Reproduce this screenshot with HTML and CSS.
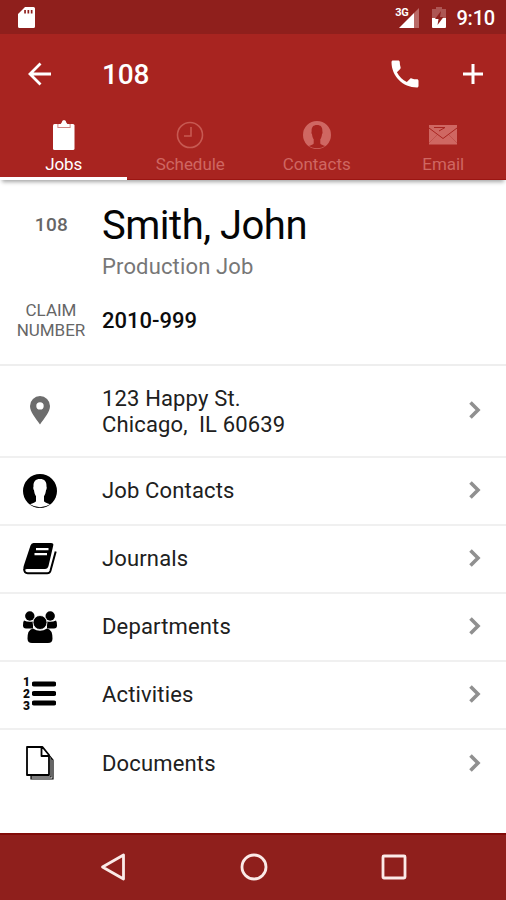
FILE: index.html
```html
<!DOCTYPE html>
<html lang="en">
<head>
<meta charset="utf-8">
<title>108</title>
<link rel="stylesheet" href="styles.css">
</head>
<body>
<svg class="defs" width="0" height="0" aria-hidden="true">
  <symbol id="person" viewBox="0 0 34 34"><path fill-rule="evenodd" d="M17 0a17 17 0 1 1 0 34a17 17 0 0 1 0-34zM17 5c-4.500 0-6.800 2.500-6.500 7.500c-.5.700-.2 3 .5 3.800c.3 2.500 1 4.500 2 6v5c-.5 1.200-3 2-6 3q4.500 2.900 10 2.900t10-2.900c-3-1-5.500-1.800-6-3v-5c1-1.500 1.700-3.500 2-6c.7-.8 1-3.100.5-3.800c.3-5-2-7.500-6.500-7.500z"/></symbol>
  <symbol id="chevron" viewBox="0 0 14 20"><path d="M2.500 2.500L10 10L2.500 17.500" fill="none" stroke="#909090" stroke-width="3.600"/></symbol>
</svg>
<div class="screen">
  <header class="status">
    <svg class="sd" width="18" height="22" viewBox="0 0 18 22"><path fill="#fff" fill-rule="evenodd" d="M7 0h8.500q1.500 0 1.500 1.500v18q0 1.500-1.500 1.500h-14q-1.500 0-1.500-1.500V7zM6.200 3v3.500h1.700V3zM9.500 3v3.500h1.700V3zM12.800 3v3.500h1.700V3z"/></svg>
    <div class="status-right">
      <span class="network">3G</span>
      <svg class="signal" width="22" height="21" viewBox="0 0 22 21"><path d="M21 0v20h-5V5z" fill="#b96a67"/><path d="M16 5v15H1z" fill="#fff"/></svg>
      <svg class="battery" width="14" height="22" viewBox="0 0 14 22"><path d="M4 0h6v2h4v9H0V2h4z" fill="#ad5654"/><path d="M0 11h14v9q0 1-1 1H1q-1 0-1-1z" fill="#fff"/><path d="M9 4l-6 8h3.500l-1 6l6-8H8z" fill="#8f1f1c"/></svg>
      <span class="time">9:10</span>
    </div>
  </header>
  <div class="appbar">
    <svg class="back" width="24" height="24" viewBox="0 0 24 24"><path d="M12.500 1.500L2 12l10.500 10.500M2 12h21" fill="none" stroke="#fff" stroke-width="2.800"/></svg>
    <h1>108</h1>
    <svg class="phone" width="36" height="36" viewBox="0 0 24 24"><path fill="#fff" d="M6.620 10.790c1.440 2.830 3.760 5.140 6.590 6.590l2.200-2.200c.27-.27.67-.36 1.020-.24 1.120.37 2.330.57 3.570.57.55 0 1 .45 1 1V20c0 .55-.45 1-1 1-9.390 0-17-7.610-17-17 0-.55.45-1 1-1h3.500c.55 0 1 .45 1 1 0 1.250.2 2.450.57 3.570.11.35.03.74-.25 1.020l-2.200 2.200z"/></svg>
    <svg class="plus" width="22" height="22" viewBox="0 0 22 22"><path d="M11 1v20M1 11h20" stroke="#fff" stroke-width="3"/></svg>
  </div>
  <nav class="tabs">
    <div class="tab active">
      <svg width="24" height="32" viewBox="0 0 24 32"><path fill="#fff" d="M2.500 5H21q1.500 0 1.500 1.500v23q0 1.500-1.500 1.500H2.500Q1 31 1 29.500v-23Q1 5 2.500 5z"/><path d="M6 5v3.500h12V5" fill="none" stroke="#cf8582" stroke-width="1.200"/><path fill="#fff" d="M6.600 8V5.500q2.500-.3 3-1.800Q10 1 12 1t2.400 2.700q.5 1.500 3 1.800V8z"/></svg>
      <span>Jobs</span>
    </div>
    <div class="tab">
      <svg width="28" height="32" viewBox="0 0 28 32"><g fill="none" stroke="#c75952" stroke-width="1.600"><circle cx="14" cy="16" r="12.500"/><path d="M15 8v9H8"/></g></svg>
      <span>Schedule</span>
    </div>
    <div class="tab">
      <svg width="30" height="32" viewBox="0 0 30 32"><use href="#person" x="1" y="1.500" width="28" height="29" fill="#cf6762"/></svg>
      <span>Contacts</span>
    </div>
    <div class="tab">
      <svg width="30" height="32" viewBox="0 0 30 32"><path fill="#cf6762" d="M1 6h28v19.500H1z"/><path d="M1 9l14 10.500L29 9M6 8.500h11l-6 3.500" fill="none" stroke="#a82420" stroke-width="1"/><path d="M1 24l8-8M29 24l-8-8" fill="none" stroke="#b94540" stroke-width=".6"/></svg>
      <span>Email</span>
    </div>
  </nav>
  <main>
    <section class="summary">
      <div class="job-no">108</div>
      <div class="heading"><div class="name">Smith, John</div><div class="kind">Production Job</div></div>
      <div class="claim">CLAIM<br>NUMBER</div>
      <div class="claim-no">2010-999</div>
    </section>
    <section class="row address">
      <div class="icon"><svg width="20" height="29" viewBox="0 0 20 29"><path fill="#6d6d6d" fill-rule="evenodd" d="M10 0a10 10 0 0 1 10 10c0 6-5.500 12-10 18.500C5.500 22 0 16 0 10A10 10 0 0 1 10 0zM10 6.200a3.700 3.700 0 1 0 0 7.400a3.700 3.700 0 1 0 0-7.400z"/></svg></div>
      <div class="label">123 Happy St.<br>Chicago,&nbsp; IL 60639</div>
      <svg class="chev" width="14" height="20"><use href="#chevron"/></svg>
    </section>
    <section class="row">
      <div class="icon"><svg width="34" height="34"><use href="#person"/></svg></div>
      <div class="label">Job Contacts</div>
      <svg class="chev" width="14" height="20"><use href="#chevron"/></svg>
    </section>
    <section class="row">
      <div class="icon"><svg width="34" height="32" viewBox="0 0 34 32"><path d="M10.500 0H28q3 0 2.200 2.800L25.500 23q-.8 3-3.500 3H4Q1.500 26 .5 27.500q-.5-2 .2-4.500L7.500 2.500Q8.300 0 10.500 0z"/><path d="M1.300 26q-.3 4.200 3.400 4.200h19.500q2.500 0 3.200-2.200l5.300-19.500" fill="none" stroke="#000" stroke-width="2"/><path d="M13 6.200h12.500M11.500 11.200H24" stroke="#fff" stroke-width="2.200"/></svg></div>
      <div class="label">Journals</div>
      <svg class="chev" width="14" height="20"><use href="#chevron"/></svg>
    </section>
    <section class="row">
      <div class="icon"><svg width="34" height="32" viewBox="0 0 34 32"><circle cx="6.800" cy="5" r="4.700"/><circle cx="27.200" cy="5" r="4.700"/><path d="M1 9.500q4 2 9 1v7H3q-3 0-3-3 0-4 1-5zM33 9.500q-4 2-9 1v7h7q3 0 3-3 0-4-1-5z"/><path d="M10 17.500q7 4.500 14 0q5.500 1 5.500 10q0 4.500-4.500 4.500H9q-4.500 0-4.500-4.500 0-9 5.500-10z"/><circle cx="17" cy="11.500" r="7" stroke="#fff" stroke-width=".8"/></svg></div>
      <div class="label">Departments</div>
      <svg class="chev" width="14" height="20"><use href="#chevron"/></svg>
    </section>
    <section class="row">
      <div class="icon"><div class="numbered"><div class="digits"><span>1</span><span>2</span><span>3</span></div><svg width="24" height="26" viewBox="0 0 24 26"><path d="M2 3h20M2 12.500h20M2 22h20" stroke="#000" stroke-width="4.800" stroke-linecap="round"/></svg></div></div>
      <div class="label">Activities</div>
      <svg class="chev" width="14" height="20"><use href="#chevron"/></svg>
    </section>
    <section class="row last">
      <div class="icon"><svg width="28" height="34" viewBox="0 0 28 34"><g fill="none" stroke="#000"><path stroke-width="1.800" stroke-linejoin="round" d="M1 1h15.500l6.500 8v20H1zM15.500 1v9h8"/><path stroke-width="1.200" d="M5 29v4h22V14l-4-5M25 11.500V31H5"/></g></svg></div>
      <div class="label">Documents</div>
      <svg class="chev" width="14" height="20"><use href="#chevron"/></svg>
    </section>
  </main>
  <footer class="navbar">
    <svg width="28" height="30" viewBox="0 0 28 30"><path d="M24.500 3v24L3.500 15z" fill="none" stroke="#fbeae8" stroke-width="2.800" stroke-linejoin="round"/></svg>
    <svg width="28" height="30" viewBox="0 0 28 30"><circle cx="14" cy="15" r="12" fill="none" stroke="#fbeae8" stroke-width="2.800"/></svg>
    <svg width="28" height="30" viewBox="0 0 28 30"><rect x="3" y="4" width="22" height="22" rx="1" fill="none" stroke="#fbeae8" stroke-width="2.800"/></svg>
  </footer>
</div>
</body>
</html>
```
FILE: styles.css
```css
* { box-sizing: border-box; }
body { margin: 0; font-family: Roboto, "Liberation Sans", sans-serif; color: #0c0c0c; background: #fff; }
svg { display: block; flex: none; }
.defs { height: 0; }
.screen { width: 506px; height: 900px; display: flex; flex-direction: column; overflow: hidden; }
.status { height: 34px; flex: none; background: #8f1f1c; display: flex; justify-content: space-between; padding: 7px 11px 0 18px; }
.status-right { display: flex; color: #fff; }
.network { font-size: 11px; font-weight: 700; line-height: 11px; margin-right: -10px; letter-spacing: -.3px; }
.signal { margin-top: 1px; }
.battery { margin: 0 10px 0 12px; }
.time { font-size: 20px; font-weight: 500; line-height: 22px; letter-spacing: -.2px; }
.appbar { height: 80px; flex: none; background: #a82420; display: flex; align-items: center; padding: 0 22px 0 28px; }
h1 { margin: 0 auto 0 50px; font-size: 28px; line-height: 32px; font-weight: 500; color: #fff; letter-spacing: -.2px; padding-top: 2px; }
.phone { margin-right: 39px; }
.tabs { height: 66px; flex: none; background: #a82420; display: grid; grid-template-columns: repeat(4, 1fr); box-shadow: 0 4px 4px -2px rgba(0,0,0,.35); }
.tab { display: flex; flex-direction: column; align-items: center; padding-top: 5px; color: #cf6762; font-size: 17px; line-height: 20px; letter-spacing: -.05px; border-bottom: 1px solid #9b1512; padding-left: 1px; }
.tab span { margin-top: 3px; }
.tab.active { color: #fff; border-bottom: 3px solid #fff; }
main { flex: 1; }
.summary { height: 186px; display: grid; grid-template-columns: 102px 1fr; grid-template-rows: 106px 80px; border-bottom: 2px solid #eee; }
.job-no { text-align: center; padding-top: 33px; padding-left: 1px; font-size: 19px; line-height: 24px; font-weight: 500; color: #666; letter-spacing: .3px; }
.heading { padding-top: 22px; }
.name { font-size: 40px; line-height: 48px; color: #050505; letter-spacing: -.5px; }
.kind { font-size: 22px; line-height: 26px; color: #777; padding-top: 4px; letter-spacing: .15px; }
.claim { text-align: center; font-size: 17px; line-height: 19.500px; color: #666; padding-top: 15px; }
.claim-no { font-size: 22px; line-height: 28px; font-weight: 500; padding-top: 21px; }
.row { height: 68px; display: grid; grid-template-columns: 80px 1fr 14px; column-gap: 22px; align-items: center; padding-right: 24px; border-bottom: 2px solid #f0f0f0; }
.row.address { height: 92px; }
.row.last { height: 67px; border-bottom: 0; }
.icon { display: flex; justify-content: center; margin-top: -1px; }
.label { font-size: 22px; line-height: 26px; letter-spacing: .15px; color: #202020; }
.address .label { padding-top: 1px; }
.chev { margin-top: -2px; }
.numbered { display: flex; align-items: center; width: 34px; height: 34px; margin-top: -1px; }
.digits { display: flex; flex-direction: column; width: 9px; font-size: 12px; line-height: 11px; font-weight: 900; gap: 1px; }
.navbar { height: 67px; flex: none; background: #8f1f1c; border-top: 2px solid #820b08; display: flex; justify-content: space-between; align-items: center; padding: 0 98px 2px 99px; }
```
